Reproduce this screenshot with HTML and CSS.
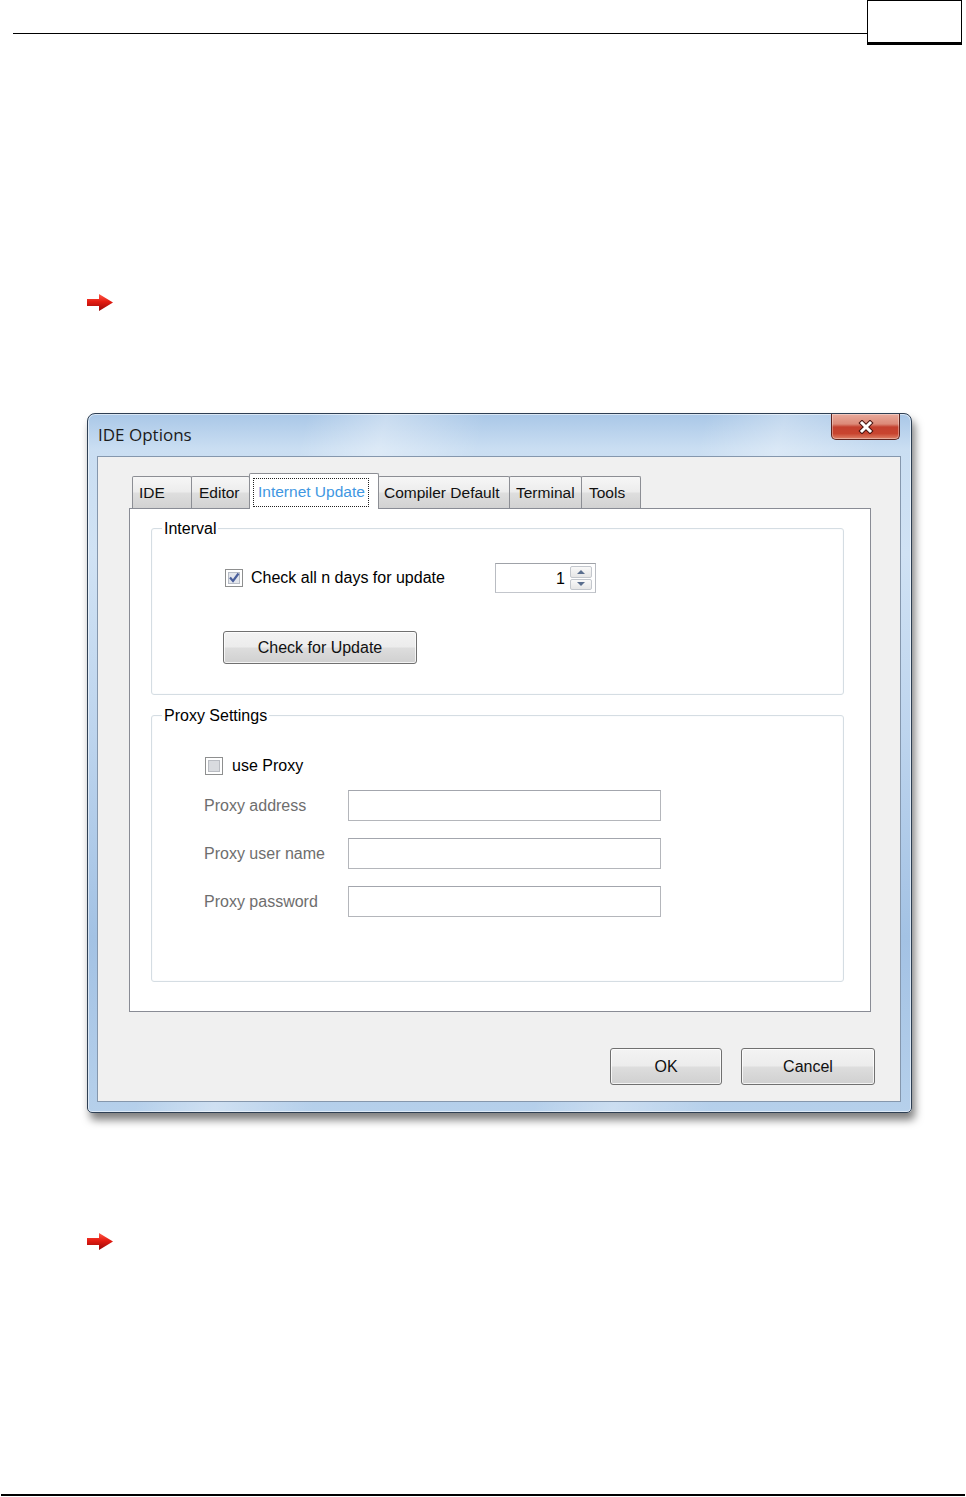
FILE: index.html
```html
<!DOCTYPE html>
<html lang="en">
<head>
<meta charset="utf-8">
<title>IDE Options</title>
<link rel="stylesheet" href="styles.css">
</head>
<body>
<div class="page">
  <header class="hdr">
    <div class="hdr-line"></div>
    <div class="hdr-box"></div>
  </header>

  <div class="arrow arrow-1">
    <svg width="26" height="17" viewBox="0 0 26 17"><defs><linearGradient id="ar1" x1="0" y1="0" x2="0" y2="1"><stop offset="0" stop-color="#ff5a48"/><stop offset=".45" stop-color="#e41c12"/><stop offset="1" stop-color="#980808"/></linearGradient></defs><path d="M0 5 H12 V0 L26 8.5 L12 17 V12 H0 Z" fill="url(#ar1)"/></svg>
  </div>

  <div class="window">
    <div class="titlebar">
      <div class="title">IDE Options</div>
      <div class="close">
        <svg width="20" height="14" viewBox="0 0 20 14"><path d="M6 3 L14 11 M14 3 L6 11" stroke="#4a1410" stroke-width="5" stroke-linecap="square"/><path d="M6 3 L14 11 M14 3 L6 11" stroke="#fff" stroke-width="3" stroke-linecap="square"/></svg>
      </div>
    </div>
    <div class="client">
      <div class="tabs">
        <div class="tab tab-ide">IDE</div>
        <div class="tab tab-editor">Editor</div>
        <div class="tab tab-inet is-active"><span class="focus">Internet Update</span></div>
        <div class="tab tab-comp">Compiler Default</div>
        <div class="tab tab-term">Terminal</div>
        <div class="tab tab-tools">Tools</div>
      </div>
      <div class="panel">
        <fieldset class="grp grp-interval">
          <legend>Interval</legend>
          <div class="interval-body">
            <div class="row-check">
              <label class="check check-days">
                <svg class="cb" width="18" height="18" viewBox="0 0 18 18"><rect x="0.5" y="0.5" width="17" height="17" fill="#fff" stroke="#8e8f8f"/><rect x="3.5" y="3.5" width="11" height="11" fill="#e3e6ec" stroke="#b7bcc6"/><path d="M5 8.5 L8 12 L13.5 4.5" stroke="#4a5f9c" stroke-width="2.2" fill="none"/></svg>
                <span>Check all n days for update</span>
              </label>
              <div class="spin">
                <div class="spin-val">1</div>
                <div class="spin-btns">
                  <div class="spin-btn"><span class="tri-up"></span></div>
                  <div class="spin-btn"><span class="tri-down"></span></div>
                </div>
              </div>
            </div>
            <div class="btn btn-update">Check for Update</div>
          </div>
        </fieldset>
        <fieldset class="grp grp-proxy">
          <legend>Proxy Settings</legend>
          <div class="proxy-body">
            <label class="check check-proxy">
              <svg class="cb" width="18" height="18" viewBox="0 0 18 18"><rect x="0.5" y="0.5" width="17" height="17" fill="#fff" stroke="#8e8f8f"/><rect x="3.5" y="3.5" width="11" height="11" fill="#d9dbdf" stroke="#b9bcc2"/></svg>
              <span>use Proxy</span>
            </label>
            <div class="field"><span class="field-label">Proxy address</span><div class="edit"></div></div>
            <div class="field"><span class="field-label">Proxy user name</span><div class="edit"></div></div>
            <div class="field"><span class="field-label">Proxy password</span><div class="edit"></div></div>
          </div>
        </fieldset>
      </div>
      <div class="actions">
        <div class="btn btn-ok">OK</div>
        <div class="btn btn-cancel">Cancel</div>
      </div>
    </div>
  </div>

  <div class="arrow arrow-2">
    <svg width="26" height="17" viewBox="0 0 26 17"><defs><linearGradient id="ar2" x1="0" y1="0" x2="0" y2="1"><stop offset="0" stop-color="#ff5a48"/><stop offset=".45" stop-color="#e41c12"/><stop offset="1" stop-color="#980808"/></linearGradient></defs><path d="M0 5 H12 V0 L26 8.5 L12 17 V12 H0 Z" fill="url(#ar2)"/></svg>
  </div>

  <footer class="ftr"></footer>
</div>
</body>
</html>
```
FILE: styles.css
```css
* { box-sizing: border-box; }
body {
  margin: 0;
  background: #fff;
  font-family: "Liberation Sans", Arial, sans-serif;
  font-size: 16px;
  color: #000;
}
.page {
  width: 966px;
  height: 1497px;
  display: flex;
  flex-direction: column;
  overflow: hidden;
}

/* header */
.hdr { display: flex; align-items: flex-start; height: 45px; flex: none; }
.hdr-line { margin: 33px 0 0 13px; width: 854px; height: 1px; background: #000; }
.hdr-box { width: 95px; height: 45px; border: 1px solid #000; border-bottom-width: 3px; }

/* arrows */
.arrow { margin-left: 87px; width: 26px; height: 17px; flex: none; line-height: 0; }
.arrow-1 { margin-top: 249px; }
.arrow-2 { margin-top: 120px; }

/* footer */
.ftr { margin: 244px 0 0 1px; width: 964px; height: 2px; background: #000; flex: none; }

/* window */
.window {
  flex: none;
  margin: 102px 0 0 87px;
  width: 825px;
  height: 700px;
  border: 1px solid #2e3f53;
  border-radius: 8px 8px 5px 5px;
  padding: 0 10px 10px 9px;
  background:
    linear-gradient(104deg, rgba(255,255,255,0) 22%, rgba(255,255,255,.35) 30%, rgba(255,255,255,0) 40%, rgba(255,255,255,0) 62%, rgba(255,255,255,.3) 70%, rgba(255,255,255,0) 80%),
    linear-gradient(180deg, #a9c7e7 0%, #cadef2 5%, #d0e2f4 20%, #bed5ee 45%, #a3c2e4 75%, #b6d0eb 100%);
  box-shadow: inset 0 0 0 1px rgba(255,255,255,.55), 3px 7px 8px rgba(0,0,0,.5);
  display: flex;
  flex-direction: column;
}
.titlebar {
  height: 42px;
  flex: none;
  display: flex;
  justify-content: space-between;
  align-items: flex-start;
}
.title {
  margin: 10px 0 0 1px;
  font-family: "Open Sans", "Liberation Sans", sans-serif;
  font-size: 17px;
  line-height: 22px;
  color: #1b1b1b;
}
.close {
  width: 69px;
  height: 26px;
  margin-right: 1px;
  border: 1px solid #5e241e;
  border-top: none;
  border-radius: 0 0 5px 5px;
  background: linear-gradient(180deg, #e9aa9c 0%, #dc8a78 40%, #c4412f 52%, #c8442f 78%, #de8268 100%);
  box-shadow: inset 0 0 0 1px rgba(255,255,255,.35);
  display: flex;
  align-items: center;
  justify-content: center;
}

/* client */
.client {
  flex: none;
  height: 646px;
  border: 1px solid #8597ad;
  background: #f0f0f0;
  padding: 16px 0 0 31px;
  display: flex;
  flex-direction: column;
}

/* tabs */
.tabs {
  display: flex;
  align-items: flex-end;
  height: 35px;
  padding-left: 3px;
  position: relative;
  z-index: 1;
  flex: none;
}
.tab {
  height: 32px;
  margin-right: -1px;
  border: 1px solid #8c8e94;
  border-bottom: none;
  border-radius: 2px 2px 0 0;
  background: linear-gradient(180deg, #f6f6f6 0%, #ececec 48%, #dedede 52%, #d2d2d2 100%);
  padding-left: 6px;
  font-size: 15.5px;
  line-height: 31px;
  white-space: nowrap;
  color: #111;
}
.tab-ide { width: 60px; }
.tab-editor { width: 59px; padding-left: 7px; }
.tab-inet { width: 130px; }
.tab-comp { width: 132px; padding-left: 5px; }
.tab-term { width: 73px; }
.tab-tools { width: 60px; padding-left: 7px; }
.tab.is-active {
  height: 36px;
  margin-bottom: -1px;
  background: #fff;
  color: #3f97e2;
  padding-left: 3px;
  padding-top: 4px;
  line-height: 22px;
  position: relative;
}
.focus {
  display: inline-block;
  border: 1px dotted #222;
  padding: 2px 3px 3px 4px;
  line-height: 22px;
}

/* panel */
.panel {
  flex: none;
  width: 742px;
  height: 504px;
  border: 1px solid #898c95;
  background: #fff;
  padding: 9px 26px 0 21px;
}
.grp {
  margin: 0;
  padding: 0;
  min-width: 0;
  border: 1px solid #d5dde3;
  border-radius: 3px;
  box-shadow: inset 0 0 0 1px #fbfcfd;
}
.grp legend {
  margin-left: 10px;
  padding: 2px 2px 0;
  font-size: 16px;
  line-height: 18px;
}
.grp-proxy { margin-top: 10px; }

.interval-body { padding: 25px 0 30px 73px; }
.row-check { display: flex; align-items: center; height: 30px; }
.check { display: flex; align-items: center; gap: 8px; }
.check-days { width: 270px; }
.cb { flex: none; display: block; }

.spin {
  width: 101px;
  height: 30px;
  border: 1px solid #a9abb0;
  border-color: #9fa2a8 #b9bcc2 #c3c6cc #b9bcc2;
  display: flex;
  padding: 2px 3px 2px 2px;
}
.spin-val { flex: 1; text-align: right; line-height: 25px; padding-right: 5px; }
.spin-btns { width: 22px; display: flex; flex-direction: column; gap: 1px; }
.spin-btn {
  flex: 1;
  border: 1px solid #c3c7cd;
  border-radius: 2px;
  background: linear-gradient(180deg, #f9f9f9, #e6e6e6);
  display: flex;
  align-items: center;
  justify-content: center;
}
.tri-up { width: 0; height: 0; border-left: 4px solid transparent; border-right: 4px solid transparent; border-bottom: 4px solid #5a6e8e; }
.tri-down { width: 0; height: 0; border-left: 4px solid transparent; border-right: 4px solid transparent; border-top: 4px solid #5a6e8e; }

.btn {
  border: 1px solid #707070;
  border-radius: 3px;
  background: linear-gradient(180deg, #f3f3f3 0%, #ececec 48%, #dddddd 52%, #d0d0d0 100%);
  box-shadow: inset 0 0 0 1px rgba(255,255,255,.75);
  display: flex;
  align-items: center;
  justify-content: center;
  color: #111;
}
.btn-update { width: 194px; height: 33px; margin: 38px 0 0 -2px; }

.proxy-body { padding: 31px 0 64px 52px; }
.check-proxy { height: 20px; margin-left: 1px; gap: 9px; }
.field { display: flex; align-items: center; height: 31px; margin-top: 17px; }
.check-proxy + .field { margin-top: 14px; }
.field-label { width: 144px; color: #6e6e6e; }
.edit {
  width: 313px;
  height: 31px;
  border: 1px solid #b4b6bb;
  border-top-color: #a3a6ad;
  background: #fff;
}

/* bottom buttons */
.actions {
  display: flex;
  justify-content: flex-end;
  gap: 19px;
  margin-top: 36px;
  padding-right: 25px;
  flex: none;
}
.btn-ok { width: 112px; height: 37px; }
.btn-cancel { width: 134px; height: 37px; }
```
